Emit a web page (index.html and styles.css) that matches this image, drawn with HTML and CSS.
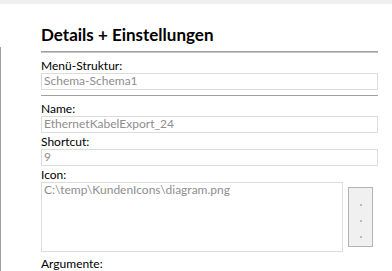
FILE: index.html
```html
<!DOCTYPE html>
<html lang="de">
<head>
<meta charset="utf-8">
<link rel="stylesheet" href="styles.css">
</head>
<body>
<div class="topbar"></div>
<div class="main">
  <div class="edge"></div>
  <div class="panel">
    <div class="title">Details + Einstellungen</div>
    <div class="sep"></div>
    <div class="lbl">Menü-Struktur:</div>
    <div class="field">Schema-Schema1</div>
    <div class="sep sep2"></div>
    <div class="lbl">Name:</div>
    <div class="field">EthernetKabelExport_24</div>
    <div class="lbl">Shortcut:</div>
    <div class="field">9</div>
    <div class="lbl">Icon:</div>
    <div class="iconrow">
      <div class="area">C:\temp\KundenIcons\diagram.png</div>
      <div class="btn"><span class="dot"></span><span class="dot"></span><span class="dot"></span></div>
    </div>
    <div class="lbl lbl-args">Argumente:</div>
  </div>
</div>
</body>
</html>
```
FILE: styles.css
```css
html, body {
  margin: 0;
  padding: 0;
  background: #ffffff;
  overflow: hidden;
}
body {
  width: 392px;
  height: 271px;
  font-family: Lato, "Open Sans", sans-serif;
  color: #000;
}
.topbar {
  height: 4px;
  background: #f0f0f0;
}
.main {
  display: flex;
  height: 267px;
}
.edge {
  width: 1px;
  margin-top: 43px;
  background: #a0a0a0;
}
.panel {
  width: 337px;
  margin-left: 40px;
  padding-top: 21px;
  display: flex;
  flex-direction: column;
}
.title {
  font-weight: 700;
  font-size: 17px;
  line-height: 20px;
  height: 20px;
  margin-bottom: 6px;
  white-space: nowrap;
}
.sep {
  height: 2px;
  background: linear-gradient(#a0a0a0 0 1px, #c4c4c4 1px 2px);
}
.sep2 {
  margin-top: 5px;
}
.lbl {
  font-size: 12px;
  line-height: 16px;
  height: 16px;
  padding-top: 1px;
  box-sizing: border-box;
  white-space: nowrap;
}
.sep + .lbl {
  margin-top: 4px;
}
.field {
  box-sizing: border-box;
  height: 18px;
  border: 1px solid #dcdcdc;
  font-size: 12px;
  line-height: 13px;
  padding-left: 2px;
  color: #8e8e8e;
  white-space: nowrap;
}
.iconrow {
  display: flex;
  align-items: center;
  gap: 5px;
}
.area {
  box-sizing: border-box;
  width: 302px;
  height: 70px;
  border: 1px solid #dcdcdc;
  font-size: 12px;
  line-height: 13px;
  padding: 0 2px;
  color: #8e8e8e;
  white-space: nowrap;
}
.btn {
  box-sizing: border-box;
  width: 25px;
  height: 60px;
  border: 1px solid #b4b4b4;
  background: #f0f0f0;
  display: flex;
  flex-direction: column;
  align-items: center;
  justify-content: center;
  gap: 14px;
  padding-top: 9px;
}
.dot {
  width: 2px;
  height: 2px;
  border-radius: 1px;
  background: #a8a8a8;
}
.lbl-args {
  margin-top: 3px;
}
```
